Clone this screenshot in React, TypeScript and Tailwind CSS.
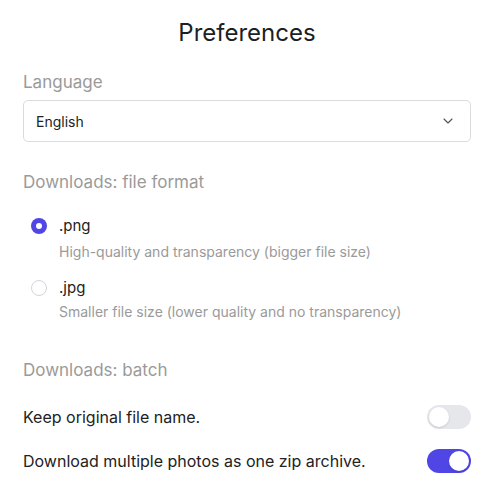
import { useState } from 'react';
import { ChevronDown } from 'lucide-react';

function Toggle({ on, onClick }: { on: boolean; onClick: () => void }) {
  return (
    <button
      onClick={onClick}
      className={`relative w-[44px] h-[24px] rounded-full shrink-0 transition-colors ${on ? 'bg-[#4f46e5]' : 'bg-[#e5e7eb]'}`}
    >
      <span
        className={`absolute top-[2px] w-[20px] h-[20px] rounded-full bg-white shadow-sm ${on ? 'left-[22px]' : 'left-[2px]'}`}
      />
    </button>
  );
}

function Radio({ checked }: { checked: boolean }) {
  return checked ? (
    <span className="block w-[16px] h-[16px] rounded-full bg-[#4f46e5] flex items-center justify-center shrink-0">
      <span className="block w-[6px] h-[6px] rounded-full bg-white" />
    </span>
  ) : (
    <span className="block w-[16px] h-[16px] rounded-full border border-[#d1d5db] bg-white shrink-0" />
  );
}

export default function App() {
  const [format, setFormat] = useState<'png' | 'jpg'>('png');
  const [keepName, setKeepName] = useState(false);
  const [zip, setZip] = useState(true);

  return (
    <div className="h-screen overflow-hidden bg-white pl-[23px] pr-[18px] pt-[18px] text-[#1f2328]" style={{ fontFamily: 'Inter, "Noto Sans", sans-serif' }}>
      {/* Header */}
      <h1 className="text-center text-[24px] leading-[30px] text-[#1c1f23]">Preferences</h1>

      {/* Language */}
      <div className="mt-[24px] text-[17px] leading-[20px] text-[#9a9a9a]">Language</div>
      <div className="mt-[8px] h-[42px] rounded-[5px] border border-[#d9dbde] flex items-center justify-between pl-[12px] pr-[14px]">
        <span className="text-[14px] text-[#222]">English</span>
        <ChevronDown className="w-[16px] h-[16px] text-[#555]" strokeWidth={1.75} />
      </div>

      {/* File format */}
      <div className="mt-[30px] text-[17px] leading-[20px] text-[#9a9a9a]">Downloads: file format</div>
      <div className="mt-[24px] flex flex-col gap-[17px]">
        <button className="flex gap-[12px] text-left pl-[8px]" onClick={() => setFormat('png')}>
          <span className="pt-[2px]"><Radio checked={format === 'png'} /></span>
          <span>
            <div className="text-[15px] leading-[20px] text-[#222]">.png</div>
            <div className="mt-[7px] text-[14px] leading-[18px] text-[#9a9a9a]">High-quality and transparency (bigger file size)</div>
          </span>
        </button>
        <button className="flex gap-[12px] text-left pl-[8px]" onClick={() => setFormat('jpg')}>
          <span className="pt-[2px]"><Radio checked={format === 'jpg'} /></span>
          <span>
            <div className="text-[15px] leading-[20px] text-[#222]">.jpg</div>
            <div className="mt-[5px] text-[14px] leading-[18px] text-[#9a9a9a]">Smaller file size (lower quality and no transparency)</div>
          </span>
        </button>
      </div>

      {/* Batch */}
      <div className="mt-[39px] text-[17px] leading-[20px] text-[#9a9a9a]">Downloads: batch</div>
      <div className="mt-[25px] flex flex-col gap-[20px]">
        <div className="flex items-center justify-between">
          <span className="text-[16px] text-[#222]">Keep original file name.</span>
          <Toggle on={keepName} onClick={() => setKeepName(!keepName)} />
        </div>
        <div className="flex items-center justify-between">
          <span className="text-[16px] text-[#222]">Download multiple photos as one zip archive.</span>
          <Toggle on={zip} onClick={() => setZip(!zip)} />
        </div>
      </div>
    </div>
  );
}
